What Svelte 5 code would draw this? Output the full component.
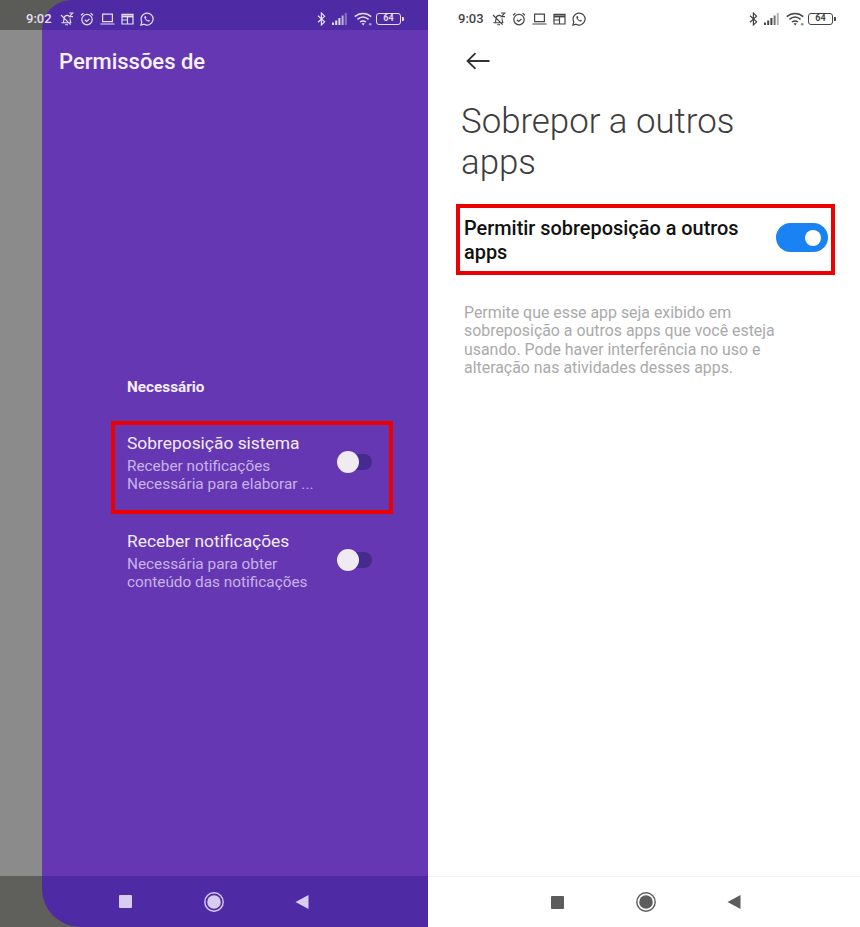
<script>
  const items = [
    { title: "Sobreposição sistema", lines: ["Receber notificações", "Necessária para elaborar ..."], marked: true },
    { title: "Receber notificações", lines: ["Necessária para obter", "conteúdo das notificações"], marked: false },
  ];
</script>

{#snippet statusbar(time)}
  <div class="status-row">
    <span class="time">{time}</span>
    <!-- muted bell -->
    <svg class="ic" width="14" height="14" viewBox="0 0 14 14" fill="none" stroke="currentColor" stroke-width="1.1">
      <path d="M1.4 10.8h9.8M3 10.8c.9-1.1.8-2.4.9-3.8.1-2 1.2-3.4 2.9-3.6.8-.1 1.6.1 2.2.6M10 6.6c0 1.6.2 3 1.2 4.2M5.2 12.8h2.8M1 3l9.6 9.6M9.2 1h3.6L9.4 4.6h3.6" />
    </svg>
    <!-- alarm -->
    <svg class="ic" width="14" height="14" viewBox="0 0 14 14" fill="none" stroke="currentColor" stroke-width="1.2">
      <circle cx="7" cy="7.6" r="5.2" />
      <path d="M1 3.2 3.4 1.2M13 3.2 10.6 1.2M4.8 7.8 6.6 9.4 9.4 7" />
    </svg>
    <!-- laptop -->
    <svg class="ic" width="15" height="14" viewBox="0 0 15 14" fill="none" stroke="currentColor" stroke-width="1.2">
      <path d="M2.6 2.2h9.8v7.4H2.6zM.4 12h14.2" />
    </svg>
    <!-- calendar window -->
    <svg class="ic" width="13" height="14" viewBox="0 0 13 14" fill="none" stroke="currentColor" stroke-width="1.2">
      <path d="M1 2.4h11v9.6H1z" />
      <path d="M1 4.4h11" stroke-width="2" />
      <path d="M1 8h5.5M6.5 5v7" />
    </svg>
    <!-- whatsapp -->
    <svg class="ic" width="14" height="14" viewBox="0 0 14 14" fill="none" stroke="currentColor" stroke-width="1.2">
      <path d="M.9 13.1l.9-3.2A6 6 0 1 1 4 12.2z" />
      <path d="M4.7 4.2c-.5.6-.5 1.5.3 2.8.9 1.4 2.2 2.4 3.4 2.6.8.1 1.4-.3 1.5-1L8.6 7.8 8 8.4C7 8 6.2 7.2 5.8 6.2l.6-.6-.7-1.5z" fill="currentColor" stroke="none" />
    </svg>

    <span class="spacer"></span>

    <!-- bluetooth -->
    <svg class="ic" width="9" height="14" viewBox="0 0 9 14" fill="none" stroke="currentColor" stroke-width="1.2">
      <path d="M1 3.8 7.6 9.8 4.4 13V1l3.2 3.2L1 10.2" />
    </svg>
    <!-- signal -->
    <svg class="ic signal" width="15" height="12" viewBox="0 0 15 12" fill="currentColor">
      <rect x="0" y="9.5" width="2" height="2.5" />
      <rect x="3.2" y="7.5" width="2" height="4.5" />
      <rect x="6.4" y="5" width="2" height="7" />
      <rect x="9.6" y="2.5" width="2" height="9.5" opacity="0.75" />
      <rect x="12.8" y="0" width="2" height="12" opacity="0.4" />
    </svg>
    <!-- wifi -->
    <svg class="ic wifi" width="19" height="14" viewBox="0 0 19 14" fill="none" stroke="currentColor" stroke-width="1.5">
      <path d="M.8 4.6c4.8-4.2 11.6-4.2 16.4 0M3.4 7.4c3.4-2.8 7.8-2.8 11.2 0M6 10c1.9-1.4 4.1-1.4 6 0" />
      <path d="M7.6 11.6 9.2 13.6l1.6-2c-1-.6-2.2-.6-3.2 0z" fill="currentColor" stroke="none" />
      <circle cx="16.2" cy="12.2" r="1.3" fill="currentColor" stroke="none" opacity="0.6" />
    </svg>
    <!-- battery -->
    <span class="battery"><span class="level">64</span></span>
    <span class="tip"></span>
  </div>
{/snippet}

{#snippet navbar()}
  <div class="nav-row">
    <span class="square"></span>
    <svg class="home" width="22" height="22" viewBox="0 0 22 22">
      <circle cx="11" cy="11" r="9.2" fill="none" stroke="currentColor" stroke-width="1.4" />
      <circle cx="11" cy="11" r="6.8" fill="currentColor" />
    </svg>
    <svg class="back" width="14" height="16" viewBox="0 0 14 16">
      <path d="M13.5 1v14L.5 8z" fill="currentColor" />
    </svg>
  </div>
{/snippet}

<main class="screens">
  <section class="pane left">
    <div class="sheet">
      <header class="status">
        {@render statusbar("9:02")}
      </header>
      <div class="app">
        <h1>Permissões de</h1>
        <div class="list">
          <h2>Necessário</h2>
          {#each items as item}
            <div class="item" class:marked={item.marked}>
              <div class="copy">
                <div class="item-title">{item.title}</div>
                {#each item.lines as line}
                  <div class="item-sub">{line}</div>
                {/each}
              </div>
              <span class="switch-off"><span class="knob"></span></span>
            </div>
          {/each}
        </div>
      </div>
      <footer class="nav">
        {@render navbar()}
      </footer>
    </div>
  </section>

  <section class="pane right">
    <header class="status">
      {@render statusbar("9:03")}
    </header>
    <div class="settings">
      <svg class="arrow" width="24" height="18" viewBox="0 0 24 18" fill="none" stroke="#333" stroke-width="1.8">
        <path d="M23.5 9H1.5M9.5 1.2 1.5 9l8 7.8" />
      </svg>
      <h1>Sobrepor a outros apps</h1>
      <div class="permit">
        <span class="permit-label">Permitir sobreposição a outros apps</span>
        <span class="switch-on"><span class="dot"></span></span>
      </div>
      <p>Permite que esse app seja exibido em sobreposição a outros apps que você esteja usando. Pode haver interferência no uso e alteração nas atividades desses apps.</p>
    </div>
    <footer class="nav">
      {@render navbar()}
    </footer>
  </section>
</main>

<style>
  :global(body) {
    margin: 0;
    background: #fff;
  }

  .screens {
    display: flex;
    width: 860px;
    height: 927px;
    overflow: hidden;
    font-family: Roboto, "Liberation Sans", sans-serif;
  }

  .pane {
    display: flex;
    flex-direction: column;
    height: 927px;
  }

  .left {
    width: 428px;
    background: linear-gradient(#5b5c58 0 30px, #8b8b8b 30px 876px, #5f605b 876px);
  }

  .right {
    width: 432px;
    background: #fff;
  }

  .sheet {
    display: flex;
    flex-direction: column;
    flex: 1;
    margin-left: 42px;
  }

  .status {
    height: 30px;
    flex: none;
  }

  .left .status {
    background: #4e2ba4;
    border-top-left-radius: 38px;
    color: #e6def2;
  }

  .right .status {
    color: #444;
  }

  .status-row {
    display: flex;
    align-items: center;
    height: 37px;
    padding: 0 24px 0 26px;
  }

  .left .status-row {
    margin-left: -42px;
  }

  .right .status-row {
    padding-left: 30px;
  }

  .time {
    font-size: 13px;
    font-weight: 500;
    width: 34px;
  }

  .ic {
    flex: none;
    margin-right: 6px;
  }

  .spacer {
    flex: 1;
  }

  .signal {
    margin-right: 7px;
  }

  .wifi {
    margin-right: 3px;
  }

  .battery {
    display: flex;
    align-items: center;
    justify-content: center;
    box-sizing: border-box;
    width: 25px;
    height: 12px;
    border: 1.2px solid currentColor;
    border-radius: 3px;
  }

  .level {
    font-size: 9px;
    font-weight: 700;
    line-height: 1;
  }

  .tip {
    width: 2px;
    height: 4px;
    margin-left: 1px;
    background: currentColor;
    border-radius: 0 1px 1px 0;
  }

  .app {
    flex: 1;
    display: flex;
    flex-direction: column;
    background: #6537b3;
    color: #fff;
  }

  .app h1 {
    margin: 18px 0 0 17px;
    font-size: 22px;
    font-weight: 500;
    line-height: 28px;
    color: #f6f1fb;
  }

  .list {
    margin: 301px 0 0 69px;
    width: 282px;
  }

  .list h2 {
    margin: 0 0 24px 16px;
    font-size: 15.3px;
    font-weight: 700;
    line-height: 20px;
    color: #f3eefa;
  }

  .item {
    display: flex;
    align-items: center;
    box-sizing: border-box;
    height: 93px;
    padding: 0 21px 10px 16px;
    border: 4px solid transparent;
    border-left-width: 0;
    border-right-width: 0;
  }

  .item + .item {
    margin-top: 5px;
  }

  .marked {
    border: 4px solid #ec0000;
    padding-left: 12px;
    padding-right: 17px;
  }

  .copy {
    flex: 1;
  }

  .item-title {
    font-size: 17.4px;
    line-height: 22px;
    color: #f2ecf9;
    margin-bottom: 3px;
  }

  .item-sub {
    font-size: 15.35px;
    line-height: 18px;
    color: #c8b3ea;
  }

  .switch-off {
    display: flex;
    align-items: center;
    width: 35px;
    height: 16px;
    margin-bottom: 2px;
    background: linear-gradient(90deg, transparent 8px, #452a8f 8px);
    border-radius: 0 8px 8px 0;
  }

  .knob {
    width: 22px;
    height: 22px;
    border-radius: 50%;
    background: #eeecf2;
  }

  .nav {
    height: 51px;
    flex: none;
  }

  .left .nav {
    background: #4e2ba4;
    border-bottom-left-radius: 38px;
    color: #d8cdf0;
  }

  .right .nav {
    box-sizing: border-box;
    border-top: 1px solid #f3f3f3;
    color: #5c5c5c;
  }

  .nav-row {
    display: flex;
    align-items: center;
    height: 100%;
    padding-left: 77px;
  }

  .right .nav-row {
    padding-left: 123px;
  }

  .square {
    width: 13px;
    height: 13px;
    background: currentColor;
    border-radius: 1px;
  }

  .home {
    margin-left: 71px;
  }

  .back {
    margin-left: 70px;
  }

  .settings {
    flex: 1;
    display: flex;
    flex-direction: column;
    align-items: flex-start;
    padding: 22px 0 0 33px;
  }

  .arrow {
    margin: 0 0 0 5px;
  }

  .settings h1 {
    margin: 31px 0 0 0;
    width: 320px;
    font-size: 34.8px;
    font-weight: 300;
    line-height: 41px;
    color: #3d3d3d;
  }

  .permit {
    display: flex;
    align-items: center;
    box-sizing: border-box;
    width: 379px;
    height: 71px;
    margin: 21px 0 0 -5px;
    padding: 0 3px 0 4px;
    border: 4px solid #ec0000;
  }

  .permit-label {
    flex: 1;
    font-size: 19.9px;
    font-weight: 500;
    line-height: 24px;
    color: #111;
    padding: 2px 20px 0 0;
  }

  .switch-on {
    display: flex;
    align-items: center;
    justify-content: flex-end;
    box-sizing: border-box;
    width: 52px;
    height: 29px;
    margin-bottom: 4px;
    padding-right: 7px;
    background: #1a82f2;
    border-radius: 15px;
  }

  .dot {
    width: 16px;
    height: 16px;
    border-radius: 50%;
    background: #fff;
  }

  .settings p {
    margin: 28.5px 0 0 3px;
    width: 345px;
    font-size: 15.9px;
    line-height: 18.5px;
    color: #aaa;
  }
</style>
